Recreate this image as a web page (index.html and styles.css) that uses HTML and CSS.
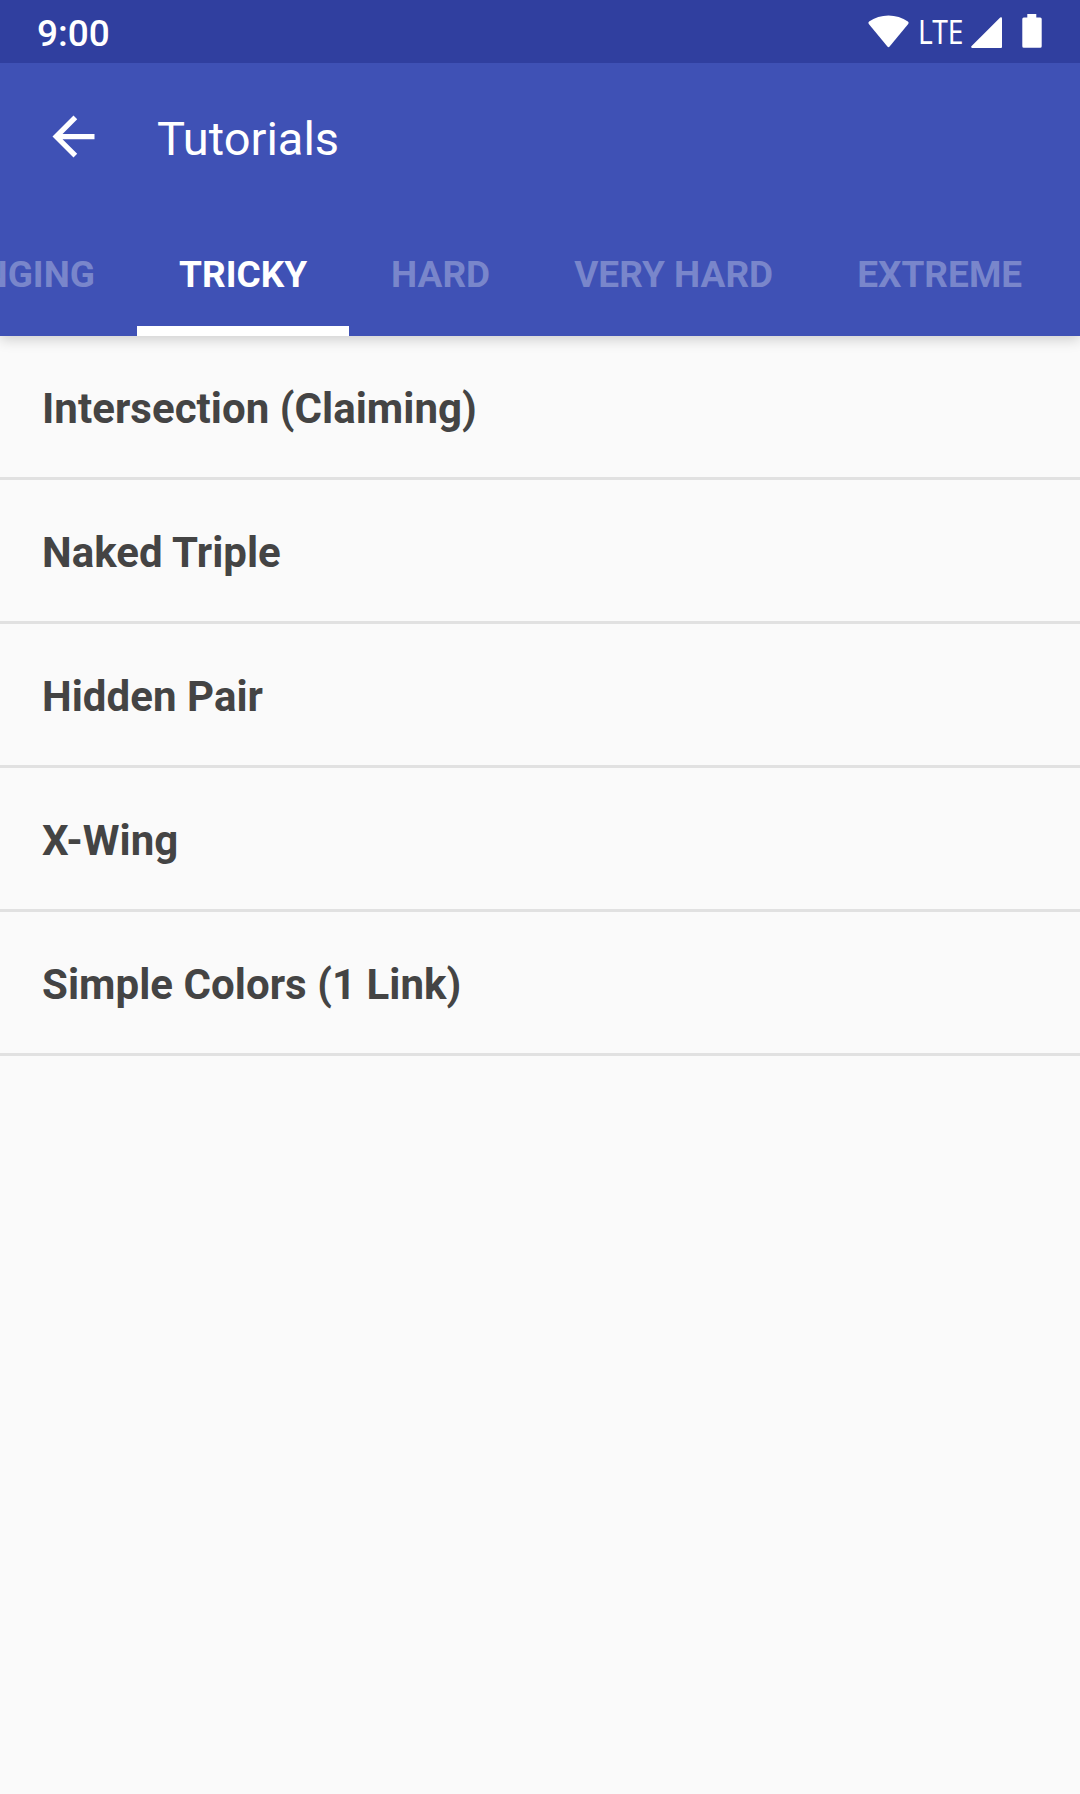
FILE: index.html
```
<!DOCTYPE html>
<html lang="en">
<head>
    <meta charset="UTF-8">
    <meta name="viewport" content="width=device-width, initial-scale=1.0">
    <title>Tutorials</title>
    <link rel="stylesheet" href="styles.css">
</head>
<body>
    <div class="status-bar">
        <span class="clock">9:00</span>
        <div class="status-icons">
            <svg class="wifi" width="41" height="33" viewBox="0 0 41 33">
                <path d="M1.1 6.4C12 -1.6 29 -1.6 39.9 6.4Q41.2 7.5 40.2 9L21.6 31.6Q20.5 32.8 19.4 31.6L.8 9Q-.2 7.5 1.1 6.4z" fill="#fff"/>
            </svg>
            <span class="network">LTE</span>
            <svg class="signal" width="31" height="31" viewBox="0 0 31 31">
                <path d="M29.2.4Q31 -.4 31 1.4V30Q31 31 30 31H1.2Q-.5 30.6.4 29.2z" fill="#fff"/>
            </svg>
            <svg class="battery" width="20" height="34" viewBox="0 0 20 34">
                <path d="M5.3 0h9v3.4h3.9Q19.7 3.4 19.7 5v27.2q0 1.6-1.5 1.6H1.8Q.3 33.8.3 32.2V5Q.3 3.4 1.8 3.4h3.5z" fill="#fff"/>
            </svg>
        </div>
    </div>

    <header class="app-bar">
        <div class="toolbar">
            <button class="back" aria-label="Back">
                <svg width="63" height="63" viewBox="0 0 24 24">
                    <path d="M20 11H7.83l5.59-5.59L12 4l-8 8 8 8 1.41-1.41L7.83 13H20v-2z" fill="#fff"/>
                </svg>
            </button>
            <h1 class="title">Tutorials</h1>
        </div>
        <nav class="tabs">
            <a class="tab tab-clipped">CHALLENGING</a>
            <a class="tab active">TRICKY</a>
            <a class="tab">HARD</a>
            <a class="tab">VERY HARD</a>
            <a class="tab">EXTREME</a>
        </nav>
    </header>

    <ul class="list">
        <li class="list-item">Intersection (Claiming)</li>
        <li class="list-item">Naked Triple</li>
        <li class="list-item">Hidden Pair</li>
        <li class="list-item">X-Wing</li>
        <li class="list-item">Simple Colors (1 Link)</li>
    </ul>
</body>
</html>
```
FILE: styles.css
```
* {
    box-sizing: border-box;
}

body {
    margin: 0;
    min-height: 100vh;
    background-color: #fafafa;
    font-family: Roboto, sans-serif;
    overflow: hidden;
}

.status-bar {
    position: relative;
    z-index: 1;
    height: 63px;
    padding: 0 38px 0 37px;
    display: flex;
    justify-content: space-between;
    background-color: #303f9f;
    color: #fff;
}

.clock {
    padding-top: 2px;
    font-size: 37px;
    font-weight: 500;
    line-height: 63px;
}

.status-icons {
    display: flex;
    align-items: flex-start;
}

.wifi {
    margin-top: 15px;
}

.network {
    width: 62px;
    padding-left: 9px;
    font-family: "Noto Sans", sans-serif;
    font-size: 32px;
    line-height: 63px;
    transform: scaleX(0.88);
    transform-origin: 9px 0;
}

.signal {
    margin-top: 17px;
}

.battery {
    margin: 14px 0 0 20px;
}

.app-bar {
    position: relative;
    background-color: #3f51b5;
    color: #fff;
    box-shadow: 0 4px 12px rgba(0, 0, 0, 0.17);
}

.toolbar {
    height: 147px;
    padding-left: 42px;
    display: flex;
    align-items: center;
}

.back {
    display: flex;
    padding: 0;
    border: none;
    background: none;
}

.title {
    margin: 5px 0 0 52px;
    font-size: 47px;
    font-weight: 400;
    line-height: 56px;
}

.tabs {
    height: 126px;
    display: flex;
    overflow: hidden;
}

.tab {
    flex: none;
    padding: 43px 42px 0;
    font-size: 37px;
    font-weight: 700;
    line-height: 44px;
    color: #7986cb;
}

.tab-clipped {
    width: 137px;
    display: flex;
    justify-content: flex-end;
}

.tab.active {
    color: #fff;
    border-bottom: 10px solid #fff;
}

.list {
    margin: 0;
    padding: 0;
    list-style: none;
}

.list-item {
    height: 144px;
    padding: 2px 42px 0;
    border-bottom: 3px solid #e1e1e1;
    color: #444;
    font-size: 42px;
    font-weight: 700;
    line-height: 141px;
    letter-spacing: 0.04px;
}
```
